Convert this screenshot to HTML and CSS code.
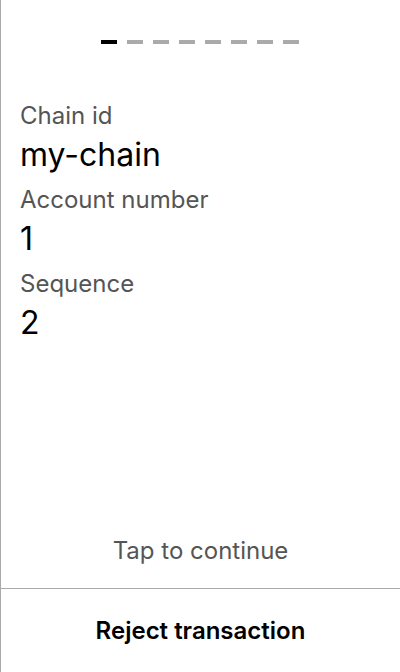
FILE: index.html
```html
<!DOCTYPE html>
<html>
<head>
<meta charset="utf-8">
<link rel="stylesheet" href="styles.css">
</head>
<body>
<div class="screen">
  <div class="progress">
    <span class="dash active"></span>
    <span class="dash"></span>
    <span class="dash"></span>
    <span class="dash"></span>
    <span class="dash"></span>
    <span class="dash"></span>
    <span class="dash"></span>
    <span class="dash"></span>
  </div>
  <div class="fields">
    <div class="field">
      <div class="label">Chain id</div>
      <div class="value">my-chain</div>
    </div>
    <div class="field">
      <div class="label">Account number</div>
      <div class="value">1</div>
    </div>
    <div class="field">
      <div class="label">Sequence</div>
      <div class="value">2</div>
    </div>
  </div>
  <div class="hint">Tap to continue</div>
  <div class="reject">Reject transaction</div>
</div>
</body>
</html>
```
FILE: styles.css
```css
* { box-sizing: border-box; }
html, body { margin: 0; padding: 0; background: #fff; }
body { font-family: Inter, "Noto Sans", sans-serif; color: #000; }
.screen {
  width: 400px;
  height: 672px;
  border-left: 1px solid #aaa;
  display: flex;
  flex-direction: column;
}
.progress {
  display: flex;
  justify-content: center;
  gap: 10px;
  padding-top: 40px;
  padding-right: 1px;
}
.dash {
  width: 16px;
  height: 4px;
  background: #aaa;
}
.dash.active { background: #000; }
.fields {
  padding: 56px 19px 0;
  display: flex;
  flex-direction: column;
}
.label {
  font-size: 24px;
  line-height: 32px;
  color: #555;
}
.value {
  font-size: 32px;
  line-height: 40px;
  margin-top: 3px;
  margin-bottom: 9px;
}
.hint {
  margin-top: auto;
  text-align: center;
  font-size: 24px;
  line-height: 32px;
  color: #555;
  padding-bottom: 21px;
}
.reject {
  height: 84px;
  border-top: 1px solid #aaa;
  display: flex;
  align-items: center;
  justify-content: center;
  font-size: 24px;
  font-weight: 600;
}
```
